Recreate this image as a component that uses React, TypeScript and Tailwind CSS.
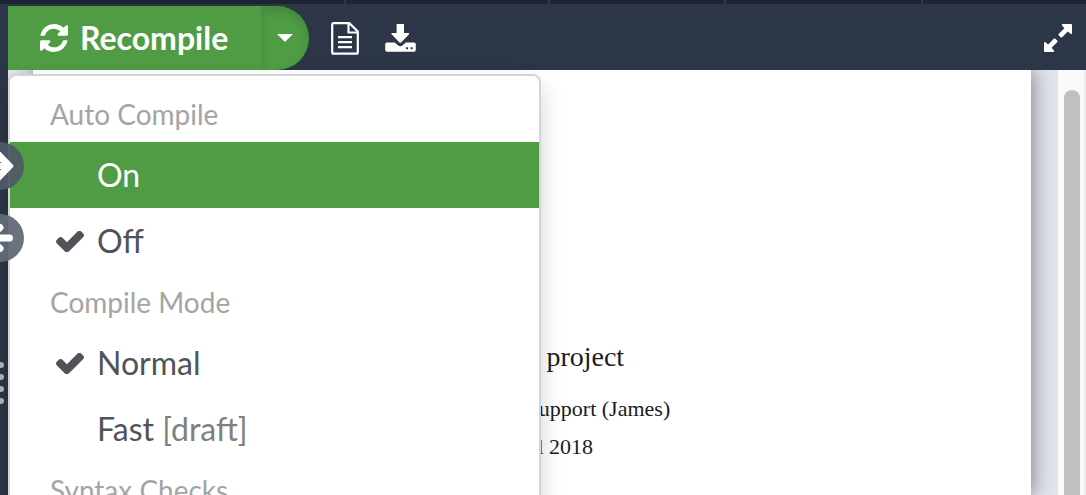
import React from "react";

function RefreshIcon() {
  return (
    <svg aria-hidden="true" viewBox="0 0 1536 1536" className="size-7 fill-current">
      <path d="M1511 928q0 5-1 7-64 268-268 434.5t-478 166.5q-146 0-282.5-55t-243.5-157l-129 129q-19 19-45 19t-45-19-19-45v-448q0-26 19-45t45-19h448q26 0 45 19t19 45-19 45l-137 137q71 66 161 102t187 36q134 0 250-65t186-179q11-17 53-117 8-23 30-23h192q13 0 22.5 9.5t9.5 22.5zm25-800v448q0 26-19 45t-45 19h-448q-26 0-45-19t-19-45 19-45l138-138q-148-137-349-137-134 0-250 65t-186 179q-11 17-53 117-8 23-30 23h-199q-13 0-22.5-9.5t-9.5-22.5v-7q65-268 270-434.5t480-166.5q146 0 284 55.5t245 156.5l130-129q19-19 45-19t45 19 19 45z" />
    </svg>
  );
}

function CheckIcon() {
  return (
    <svg aria-hidden="true" viewBox="85 270 1622 1192" className="h-[21px] w-7 fill-current stroke-current stroke-[70]">
      <path d="M1671 566q0 40-28 68l-724 724-136 136q-28 28-68 28t-68-28l-136-136-362-362q-28-28-28-68t28-68l136-136q28-28 68-28t68 28l294 295 656-657q28-28 68-28t68 28l136 136q28 28 28 68z" transform="translate(0 -60)" />
    </svg>
  );
}

function LogsIcon() {
  return (
    <svg aria-hidden="true" viewBox="0 0 28 33" className="h-[33px] w-7" fill="none" stroke="currentColor" strokeWidth="2.2" strokeLinejoin="round">
      <path d="M2.5 1.2H18.5L26.8 9.5V30.5Q26.8 31.6 25.7 31.6H2.5Q1.2 31.6 1.2 30.5V2.4Q1.2 1.2 2.5 1.2Z" />
      <path d="M17.5 1.5V10.5H26.5" />
      <path d="M7 15.2H21M7 20.2H21M7 25.2H21" />
    </svg>
  );
}

function DownloadIcon() {
  return (
    <svg aria-hidden="true" viewBox="0 0 31 28" className="h-7 w-[31px] fill-current">
      <path d="M12.3 0H18.3Q19 0 19 .8V9H23.6Q24.8 9.2 24 10.3L16.4 18.2Q15.3 19.2 14.2 18.2L6.6 10.3Q5.8 9.2 7 9H11.6V.8Q11.6 0 12.3 0Z" />
      <path
        fillRule="evenodd"
        d="M2 18.5H9.8L13 21.3Q15.3 23 17.6 21.3L20.8 18.5H29Q30.8 18.5 30.8 20.3V25.8Q30.8 27.7 29 27.7H2Q.2 27.7 .2 25.8V20.3Q.2 18.5 2 18.5ZM21 23.2V25.3H23.1V23.2ZM25.6 23.2V25.3H27.7V23.2Z"
      />
    </svg>
  );
}

function ExpandIcon() {
  return (
    <svg aria-hidden="true" viewBox="0 0 28 28" className="size-7 fill-current">
      <path d="M18.6 0H27Q28 0 28 1V9.4Q27.6 10.6 26.6 9.8L23.8 7.6L18.2 13.2Q17.4 13.9 16.6 13.2L14.8 11.4Q14.1 10.6 14.8 9.8L20.4 4.2L18 1.6Q17.4 .4 18.6 0Z" />
      <path d="M9.4 28H1Q0 28 0 27V18.6Q.4 17.4 1.4 18.2L4.2 20.4L9.8 14.8Q10.6 14.1 11.4 14.8L13.2 16.6Q13.9 17.4 13.2 18.2L7.6 23.8L10 26.4Q10.6 27.6 9.4 28Z" />
    </svg>
  );
}

function SyncToPdfIcon() {
  return (
    <svg aria-hidden="true" viewBox="-24 -24 48 48" className="size-12">
      <path d="M-14 -4H-1V-15L13.5 0L-1 15V4H-14Z" fill="#fff" />
      <path d="M-1 -15Q0 -14.6 1 -13.6L12.8 -1.2Q13.8 0 12.8 1.2L1 13.6Q0 14.6 -1 15Z" fill="#fff" />
      <path d="M-3 -3.5H1.2M-3 3.5H1.2" stroke="#505b66" strokeWidth="1.2" />
    </svg>
  );
}

function SyncToCodeIcon() {
  return (
    <svg aria-hidden="true" viewBox="-24 -24 48 48" className="size-12 fill-none stroke-white stroke-[7] [stroke-linecap:round]">
      <path d="M0 -10.5L-12 0L0 10.5" />
      <path d="M-12 0H9.5" />
    </svg>
  );
}

type OptionProps = {
  label: string;
  note?: string;
  checked?: boolean;
  active?: boolean;
};

function Option({ label, note, checked = false, active = false }: OptionProps) {
  return (
    <li role="none">
      <button
        type="button"
        role="menuitemradio"
        aria-checked={checked}
        className={
          active
            ? "flex h-[66px] w-full items-center bg-[#4f9c45] pl-[46px] text-left text-white"
            : "flex h-[66px] w-full items-center pl-[46px] text-left text-[#505458]"
        }
      >
        <span className="flex w-[41px] shrink-0 items-center">{checked && <CheckIcon />}</span>
        <span>
          {label}
          {note && <span className="text-[#808080]"> {note}</span>}
        </span>
      </button>
    </li>
  );
}

function Heading({ children }: { children: React.ReactNode }) {
  return (
    <li role="presentation" className="flex h-14 items-center pl-10 text-[28px] text-[#a4a4a4]">
      {children}
    </li>
  );
}

function CompileMenu() {
  return (
    <ul
      role="menu"
      aria-label="Compile options"
      className="absolute top-[68px] left-0 z-10 w-[533px] rounded-lg border-2 border-[#d3d4d6] bg-white pt-2.5 pb-2.5 text-[32px] leading-10 shadow-[0_12px_24px_rgba(0,0,0,0.175)]"
    >
      <Heading>Auto Compile</Heading>
      <Option label="On" active />
      <Option label="Off" checked />
      <Heading>Compile Mode</Heading>
      <Option label="Normal" checked />
      <Option label="Fast" note="[draft]" />
      <Heading>Syntax Checks</Heading>
    </ul>
  );
}

export default function App() {
  return (
    <div className="relative flex h-screen flex-col overflow-hidden bg-[#2d3646] font-['Lato',sans-serif]">
      <div className="flex h-1 shrink-0 gap-0.5">
        <div className="w-[344px] bg-[#1d2330]" />
        <div className="w-[202px] bg-[#1d2330]" />
        <div className="w-[174px] bg-[#1d2330]" />
        <div className="w-[195px] bg-[#1d2330]" />
        <div className="flex-1 bg-[#1d2330]" />
      </div>

      <header className="flex h-[66px] shrink-0 items-center pt-0.5 pr-3.5 pl-2 text-white">
        <div className="relative flex h-16">
          <button type="button" className="flex w-[253px] items-center gap-3 bg-[#4f9c45] pl-8 text-[32px] font-bold">
            <RefreshIcon />
            Recompile
          </button>
          <button
            type="button"
            aria-label="Compile options"
            aria-expanded="true"
            className="flex w-12 items-center justify-center rounded-r-full bg-[#4f9c45] shadow-[inset_0_6px_10px_rgba(0,0,0,0.125)]"
          >
            <svg aria-hidden="true" viewBox="0 0 16 8" className="h-2 w-4 fill-current">
              <path d="M0 0H16L8 8Z" />
            </svg>
          </button>
          <CompileMenu />
        </div>
        <button type="button" aria-label="Logs and output files" className="ml-[22px]">
          <LogsIcon />
        </button>
        <button type="button" aria-label="Download PDF" className="ml-[26px]">
          <DownloadIcon />
        </button>
        <button type="button" aria-label="Full screen" className="ml-auto">
          <ExpandIcon />
        </button>
      </header>

      <main className="flex min-h-0 flex-1 pl-2">
        <div className="flex min-w-0 flex-1 overflow-hidden bg-[#e0e4eb] pr-[27px] pl-[25px]">
          <article className="flex-1 bg-white pt-[267px] text-center font-['Liberation_Serif',serif] text-[#1b1b22] shadow-[0_0_20px_rgba(0,0,0,0.5)]">
            <h1 className="text-[28px] leading-10">Example project</h1>
            <p className="mt-3 text-[22px] leading-10">ShareLaTeX – Support (James)</p>
            <p className="text-[22px] leading-9">18 April 2018</p>
          </article>
        </div>
        <div className="w-7 shrink-0 border-r-2 border-[#ececec] bg-[#fafafa] pt-5 pl-1.5">
          <div className="h-full w-4 rounded-t-full bg-[#c0c0c0]" />
        </div>
      </main>

      <div className="absolute top-[142px] -left-6 z-20 flex flex-col gap-6">
        <button type="button" aria-label="Go to code location in PDF" className="size-12 rounded-full bg-[#505b66]/95">
          <SyncToPdfIcon />
        </button>
        <button type="button" aria-label="Go to PDF location in code" className="size-12 rounded-full bg-[#626a77]/95">
          <SyncToCodeIcon />
        </button>
      </div>
      <div className="absolute top-[362px] -left-0.5 flex flex-col gap-1.5">
        <span className="size-1.5 rounded-full bg-[#b4b6ba]" />
        <span className="size-1.5 rounded-full bg-[#b4b6ba]" />
        <span className="size-1.5 rounded-full bg-[#b4b6ba]" />
        <span className="size-1.5 rounded-full bg-[#b4b6ba]" />
      </div>
    </div>
  );
}
